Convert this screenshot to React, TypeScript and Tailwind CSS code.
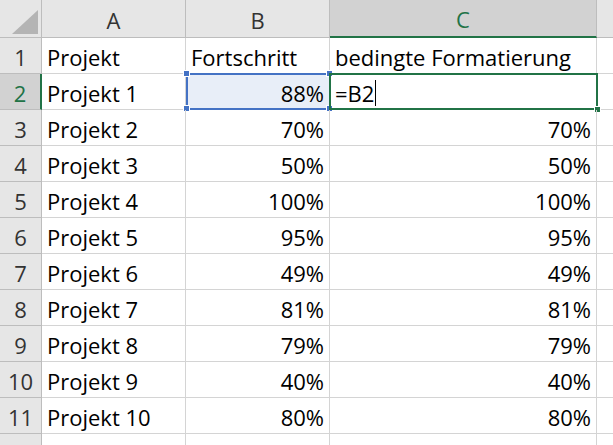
import React from "react";

const data: [string, string, string][] = [
  ["Projekt 1", "88%", ""],
  ["Projekt 2", "70%", "70%"],
  ["Projekt 3", "50%", "50%"],
  ["Projekt 4", "100%", "100%"],
  ["Projekt 5", "95%", "95%"],
  ["Projekt 6", "49%", "49%"],
  ["Projekt 7", "81%", "81%"],
  ["Projekt 8", "79%", "79%"],
  ["Projekt 9", "40%", "40%"],
  ["Projekt 10", "80%", "80%"],
];

const cell = "h-full border-r border-b border-[#d4d4d4] flex items-center px-[5px] pt-[3px] shrink-0";

export default function App() {
  return (
    <div className="w-[613px] h-[445px] overflow-hidden bg-white text-[22px] text-black" style={{ fontFamily: '"Open Sans", "Noto Sans", sans-serif' }}>
      <div className="flex h-[38px] bg-[#e6e6e6] text-[#333]">
        <div className="w-[42px] h-full border-r border-b border-[#bdbdbd] shrink-0 relative">
          <svg className="absolute right-[3px] bottom-[3px]" width="26" height="24"><polygon points="26,0 26,24 0,24" fill="#b4b4b4" /></svg>
        </div>
        <div className="w-[144px] h-full border-r border-b border-[#bdbdbd] flex items-center justify-center shrink-0 pt-[3px]">A</div>
        <div className="w-[144px] h-full border-r border-b border-[#bdbdbd] flex items-center justify-center shrink-0 pt-[3px]">B</div>
        <div className="w-[267px] h-full border-r border-[#bdbdbd] border-b-2 border-b-[#217346] bg-[#d2d2d2] text-[#217346] flex items-center justify-center shrink-0 pt-[3px]">C</div>
        <div className="flex-1 h-full border-b border-[#bdbdbd]"></div>
      </div>
      <Row n="1" a="Projekt" b="Fortschritt" c="bedingte Formatierung" header />
      {data.map((r, i) => (
        <Row key={i} n={String(i + 2)} a={r[0]} b={r[1]} c={r[2]} active={i === 0} />
      ))}
      <Row n="" a="" b="" c="" />
    </div>
  );
}

function Row({ n, a, b, c, header, active }: { n: string; a: string; b: string; c: string; header?: boolean; active?: boolean }) {
  return (
    <div className="flex h-[36px] relative">
      <div className={`w-[42px] h-full border-b border-[#bdbdbd] flex items-center justify-center shrink-0 pt-[3px] ${active ? "bg-[#d2d2d2] text-[#217346] border-r-2 border-r-[#217346]" : "bg-[#e6e6e6] text-[#333] border-r border-r-[#bdbdbd]"}`}>{n}</div>
      <div className={`${cell} w-[144px]`}>{a}</div>
      <div className={`${cell} w-[144px] ${header ? "" : "justify-end"} ${active ? "bg-[#e8eef8]" : ""}`}>{b}</div>
      <div className={`${cell} w-[267px] ${header || active ? "" : "justify-end"}`}>
        {active ? <span className="flex items-center">=B2<span className="inline-block w-[1px] h-[26px] bg-black ml-[1px]"></span></span> : c}
      </div>
      <div className="flex-1 h-full border-b border-[#d4d4d4]"></div>
      {active && (
        <>
          <div className="absolute left-[186px] top-[-1px] w-[145px] h-[37px] border-2 border-[#4472c4] pointer-events-none"></div>
          {[[183, -4], [326, -4], [183, 31], [326, 31]].map(([x, y], i) => (
            <div key={i} className="absolute w-[7px] h-[7px] bg-[#4472c4] border border-white" style={{ left: x, top: y }}></div>
          ))}
          <div className="absolute left-[329px] top-[-1px] w-[269px] h-[37px] border-2 border-[#217346] pointer-events-none"></div>
          <div className="absolute left-[594px] top-[32px] w-[7px] h-[7px] bg-[#217346] border border-white"></div>
        </>
      )}
    </div>
  );
}
